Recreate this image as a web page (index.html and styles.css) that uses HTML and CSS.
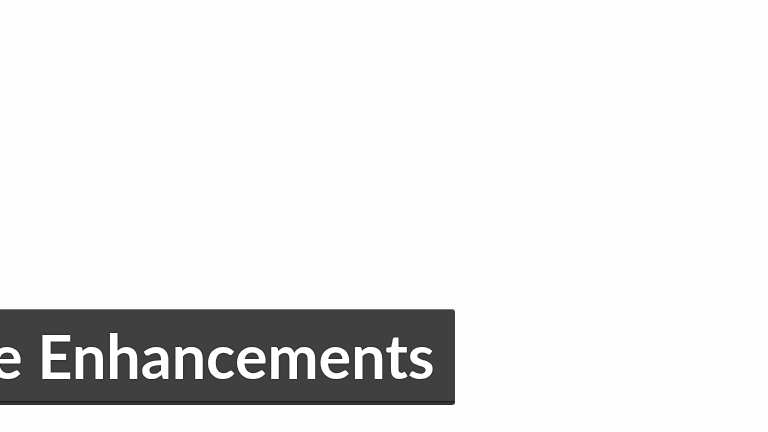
FILE: index.html
```
<!DOCTYPE html>
<html lang="en">
<head>
   <meta charset="utf-8">
   <meta name="viewport" content="width=device-width, initial-scale=1.0">
   <title>Enhancements</title>
   <link rel="stylesheet" href="styles.css">
</head>

<body>
   <main class="page">
      <h1 class="banner">e Enhancements</h1>
   </main>
</body>
</html>
```

FILE: styles.css
```
body {
   margin: 0;
   background: #fefefe;
   font-family: Lato, "Liberation Sans", sans-serif;
}

.page {
   display: flex;
   min-height: 100vh;
   box-sizing: border-box;
   padding-bottom: 27px;
   align-items: flex-end;
   overflow: hidden;
}

/* the label runs off the left edge of the window */
.banner {
   display: flex;
   justify-content: flex-end;
   box-sizing: border-box;
   width: 59.2%;
   margin: 0;
   padding: 12px 20px;
   border-top: 1px solid #777;
   border-bottom: 3px solid #333;
   border-radius: 0 3px 3px 0;
   background: #404040;
   box-shadow: inset 0 -1px 0 #1c1c1c;
   color: #fff;
   font-size: 61px;
   font-weight: 700;
   line-height: 68px;
   white-space: nowrap;
   text-shadow: 0 0 2px #000;
}
```
